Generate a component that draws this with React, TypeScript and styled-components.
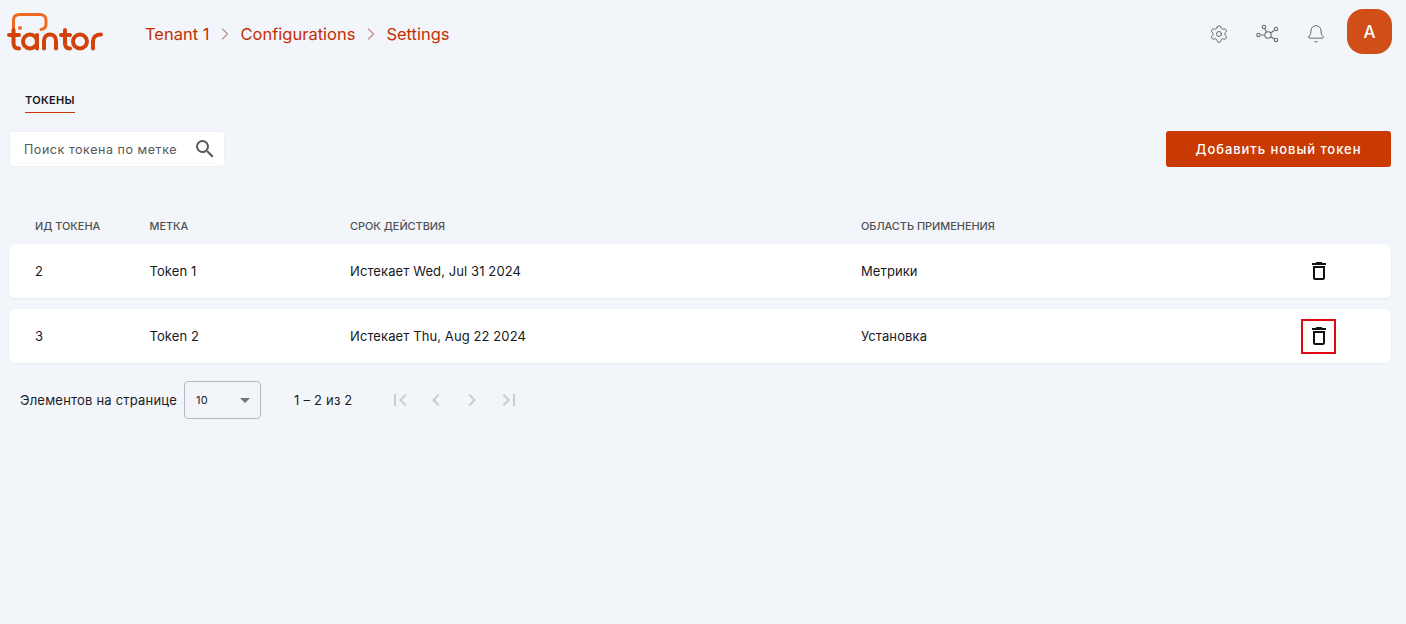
import * as React from 'react';
import styled, {createGlobalStyle} from 'styled-components';
import {ChevronRight, Settings, Bell} from 'lucide-react';
import {MdSearch, MdDeleteOutline, MdFirstPage, MdLastPage, MdChevronLeft, MdChevronRight} from 'react-icons/md';

const Global = createGlobalStyle`
    html, body {
        margin: 0;
        height: 100%;
        background: #f2f5fa;
        font-family: Inter, "Noto Sans", sans-serif;
    }
    * { box-sizing: border-box; }
`;

const Page = styled.div`
    width: 1406px;
    height: 624px;
    overflow: hidden;
    background: #f2f5fa;
    padding: 0 15px 0 9px;
`;

const Header = styled.header`
    display: flex;
    align-items: center;
    height: 68px;
    margin-left: -2px;
`;

const Crumbs = styled.nav`
    display: flex;
    align-items: center;
    margin-left: 40px;
    flex-grow: 1;
    color: #c42f00;
    font-size: 16.5px;
    font-weight: 400;
`;

const CrumbArrow = styled.span`
    display: flex;
    color: #c48f8f;
    margin: 0 5.5px;
`;

const HeaderIcons = styled.div`
    display: flex;
    align-items: center;
    color: #66696d;
`;

const IconSlot = styled.span`
    display: flex;
    justify-content: center;
    width: 48.5px;
`;

const Avatar = styled.div`
    width: 45px;
    height: 45px;
    margin: -5px -1px 0 7px;
    border-radius: 16px;
    background: #d04f19;
    color: #fff;
    font-size: 17px;
    font-weight: 500;
    display: flex;
    align-items: center;
    justify-content: center;
`;

const Tabs = styled.div`
    margin: 20px 0 0 16px;
    height: 20px;
`;

const Tab = styled.span`
    display: block;
    width: 50px;
    height: 25px;
    line-height: 25px;
    font-size: 11px;
    font-weight: 600;
    letter-spacing: 0.3px;
    color: #16181a;
    border-bottom: 1.5px solid #c93400;
`;

const Toolbar = styled.div`
    display: flex;
    justify-content: space-between;
    margin-top: 23px;
`;

const SearchBox = styled.div`
    width: 216px;
    height: 36px;
    background: #fff;
    border: 1px solid #edf0f4;
    border-radius: 3px;
    padding: 0 7px 0 14px;
    display: flex;
    align-items: center;
    justify-content: space-between;
    font-size: 12.5px;
    letter-spacing: 0.55px;
    color: #55585b;
`;

const AddButton = styled.button`
    width: 225px;
    height: 36px;
    border: 0;
    border-radius: 3px;
    background: #c93a02;
    color: #fff;
    font-family: inherit;
    font-size: 13px;
    font-weight: 500;
    letter-spacing: 0.95px;
`;

const columns = `114.5px 200.5px 511px 1fr 35px`;

const HeadRow = styled.div`
    display: grid;
    grid-template-columns: ${columns};
    padding: 0 55px 0 26px;
    margin-top: 52px;
    height: 25px;
    font-size: 10.9px;
    font-weight: 500;
    line-height: 14px;
    color: #4e5154;
`;

const Row = styled.div`
    display: grid;
    grid-template-columns: ${columns};
    align-items: center;
    padding: 0 55px 0 26px;
    height: 54px;
    margin-bottom: 11px;
    background: #fff;
    border-radius: 6px;
    font-size: 13px;
    letter-spacing: 0.1px;
    color: #17191b;
    box-shadow: 0 1px 2px rgba(40, 50, 70, 0.05);
`;

const DeleteButton = styled.span<{$focused?: boolean}>`
    width: 35px;
    height: 35px;
    display: flex;
    align-items: center;
    justify-content: center;
    color: #111;
    border: 2px solid ${p => (p.$focused ? '#e30613' : 'transparent')};
`;

const Paginator = styled.div`
    display: flex;
    align-items: center;
    margin: 18px 0 0 11px;
    font-size: 13px;
    letter-spacing: 0.2px;
    color: #1b1d1f;
`;

const SizeSelect = styled.div`
    width: 77px;
    height: 38px;
    margin-left: 7px;
    padding: 0 10px 0 11px;
    border: 1px solid #b4b8c0;
    border-radius: 4px;
    display: flex;
    align-items: center;
    justify-content: space-between;
    font-size: 11px;
`;

const Caret = styled.span`
    width: 0;
    height: 0;
    border-left: 5px solid transparent;
    border-right: 5px solid transparent;
    border-top: 5px solid #6f7377;
`;

const RangeLabel = styled.span`
    margin: 0 29.5px 0 33px;
`;

const PageButton = styled.span`
    display: flex;
    justify-content: center;
    width: 36.2px;
    color: #c9ccd1;
`;

const Logo = () => (
    <svg width="98" height="44" viewBox="7 12 98 44" fill="none" strokeLinecap="round" style={{display: 'block'}}>
        <path d="M13.5 30 V20 C13.5 16 16 14.5 20 14.5 H40 C44 14.5 46 17 46 20 V24 C46 27 44 29 41 29.5" stroke="#f26a21" strokeWidth="3" />
        <circle cx="20" cy="28" r="2" fill="#f26a21" />
        <g stroke="#d2430c" strokeWidth="4">
            <path d="M9 35 H19 M13.5 30 V43 C13.5 46.5 15.5 48.5 19 48.5" />
            <circle cx="30" cy="41.5" r="7" />
            <path d="M37 35 V48.5" />
            <path d="M44 48.5 V41 C44 36.5 47 34.5 50 34.5 C53 34.5 56 36.5 56 41 V48.5" />
            <path d="M61 35 H70 M65 30 V43 C65 46.5 66.5 48.5 70 48.5" />
            <circle cx="80" cy="41.5" r="7" />
            <path d="M93 48.5 V41 C93 37 96 34.5 101 34.5" />
        </g>
    </svg>
);

const GraphIcon = () => (
    <svg width="24" height="20" viewBox="-1 0 24 20" fill="none" stroke="currentColor" strokeWidth="1.1">
        <circle cx="12" cy="11" r="3.2" />
        <circle cx="2.5" cy="11" r="1.7" />
        <circle cx="8" cy="3" r="1.7" />
        <circle cx="20" cy="5" r="1.7" />
        <circle cx="20" cy="16" r="1.7" />
        <path d="M5 11 H8 M9 5 L10.4 8 M18.4 6.2 L15 8.8 M18.4 15 L15 13" />
    </svg>
);

const rows = [
    {id: 2, label: 'Token 1', expires: 'Истекает Wed, Jul 31 2024', scope: 'Метрики', focused: false},
    {id: 3, label: 'Token 2', expires: 'Истекает Thu, Aug 22 2024', scope: 'Установка', focused: true},
];

export default function App() {
    return (
        <Page>
            <Global />
            <Header>
                <Logo />
                <Crumbs>
                    Tenant 1
                    <CrumbArrow><ChevronRight size={20} strokeWidth={1.5} /></CrumbArrow>
                    Configurations
                    <CrumbArrow><ChevronRight size={20} strokeWidth={1.5} /></CrumbArrow>
                    Settings
                </Crumbs>
                <HeaderIcons>
                    <IconSlot><Settings size={20} strokeWidth={1.2} /></IconSlot>
                    <IconSlot><GraphIcon /></IconSlot>
                    <IconSlot><Bell size={20} strokeWidth={1.2} /></IconSlot>
                    <Avatar>A</Avatar>
                </HeaderIcons>
            </Header>
            <Tabs><Tab>ТОКЕНЫ</Tab></Tabs>
            <Toolbar>
                <SearchBox>
                    Поиск токена по метке
                    <MdSearch size={24} color="#55585b" />
                </SearchBox>
                <AddButton>Добавить новый токен</AddButton>
            </Toolbar>
            <HeadRow>
                <span>ИД ТОКЕНА</span>
                <span>МЕТКА</span>
                <span>СРОК ДЕЙСТВИЯ</span>
                <span>ОБЛАСТЬ ПРИМЕНЕНИЯ</span>
            </HeadRow>
            {rows.map(row => (
                <Row key={row.id}>
                    <span>{row.id}</span>
                    <span>{row.label}</span>
                    <span>{row.expires}</span>
                    <span>{row.scope}</span>
                    <DeleteButton $focused={row.focused}><MdDeleteOutline size={24} /></DeleteButton>
                </Row>
            ))}
            <Paginator>
                Элементов на странице
                <SizeSelect>10<Caret /></SizeSelect>
                <RangeLabel>1 – 2 из 2</RangeLabel>
                <PageButton><MdFirstPage size={24} /></PageButton>
                <PageButton><MdChevronLeft size={24} /></PageButton>
                <PageButton><MdChevronRight size={24} /></PageButton>
                <PageButton><MdLastPage size={24} /></PageButton>
            </Paginator>
        </Page>
    );
}
